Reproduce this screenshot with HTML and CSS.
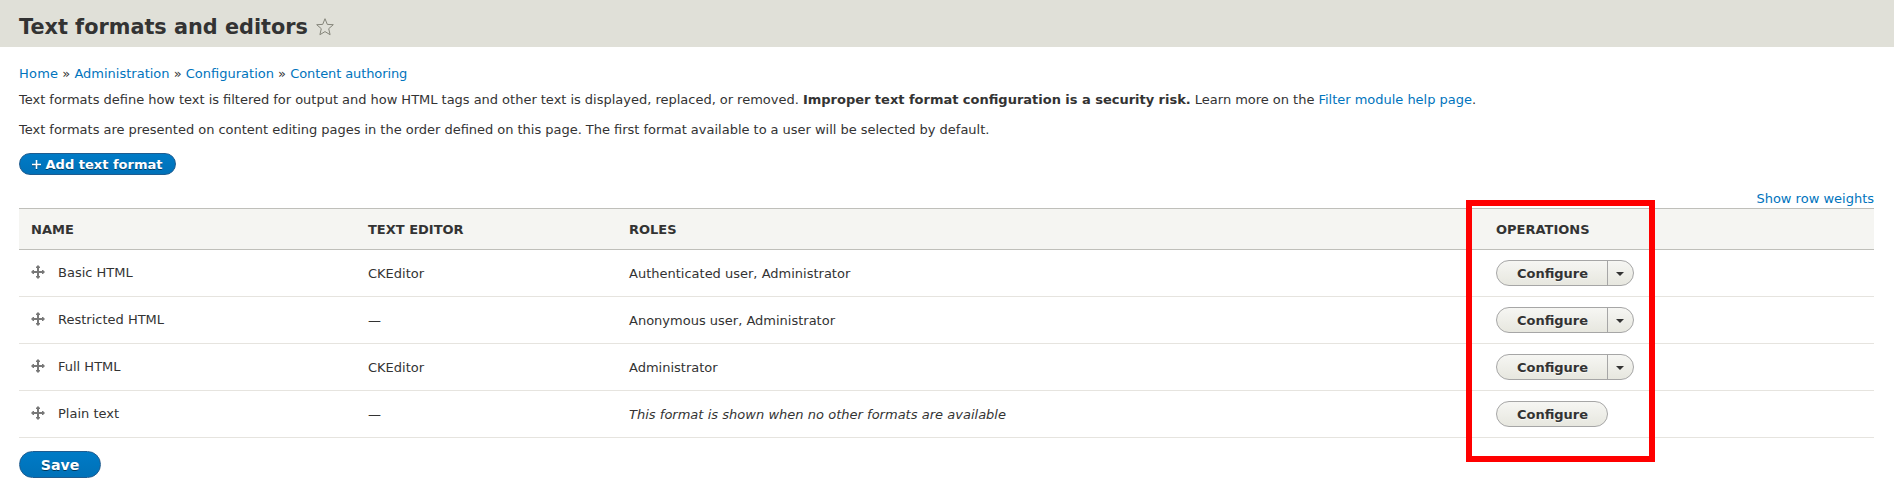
FILE: index.html
```
<!DOCTYPE html>
<html lang="en">
<head>
<meta charset="utf-8">
<title>Text formats and editors</title>
<link rel="stylesheet" href="styles.css">
</head>
<body>
<svg width="0" height="0" class="defs" aria-hidden="true">
  <symbol id="move" viewBox="0 0 14 14"><path fill="#787878" d="M7 0L9 2v1H8v3h3V5h1l2 2-2 2h-1V8H8v3h1v1l-2 2-2-2v-1h1V8H3v1H2L0 7l2-2h1v1h3V3H5V2z"/></symbol>
</svg>
<header class="header">
  <h1 class="title">Text formats and editors</h1>
  <svg class="star" width="20" height="20" viewBox="0 0 20 20"><path d="M10 1.700L12.300 7.400 18.300 7.700 13.700 11.700 15.100 17.700 10 14.600 4.900 17.700 6.300 11.700 1.700 7.700 7.700 7.400Z" fill="none" stroke="#85857a" stroke-width="1"/></svg>
</header>
<main class="content">
  <nav class="breadcrumb"><a class="home">Home</a> » <a>Administration</a> » <a>Configuration</a> » <a class="last">Content authoring</a></nav>
  <p class="help">Text formats define how text is filtered for output and how HTML tags and other text is displayed, replaced, or removed. <strong>Improper text format configuration is a security risk.</strong> Learn more on the <a>Filter module help page</a>.</p>
  <p class="help">Text formats are presented on content editing pages in the order defined on this page. The first format available to a user will be selected by default.</p>
  <a class="button primary add"><svg class="plus" width="9" height="9" viewBox="0 0 9 9"><path d="M4.500 0v9M0 4.500h9" stroke="#fff" stroke-width="1.600"/></svg>Add text format</a>
  <div class="weights"><a>Show row weights</a></div>
  <div class="table-wrap">
    <div class="row head"><div>NAME</div><div>TEXT EDITOR</div><div>ROLES</div><div>OPERATIONS</div></div>
    <div class="row"><div class="name"><svg class="handle"><use href="#move"/></svg>Basic HTML</div><div>CKEditor</div><div>Authenticated user, Administrator</div><div class="ops"><span class="drop"><a class="config">Configure</a><i class="toggle"></i></span></div></div>
    <div class="row"><div class="name"><svg class="handle"><use href="#move"/></svg>Restricted HTML</div><div>—</div><div>Anonymous user, Administrator</div><div class="ops"><span class="drop"><a class="config">Configure</a><i class="toggle"></i></span></div></div>
    <div class="row"><div class="name"><svg class="handle"><use href="#move"/></svg>Full HTML</div><div>CKEditor</div><div>Administrator</div><div class="ops"><span class="drop"><a class="config">Configure</a><i class="toggle"></i></span></div></div>
    <div class="row"><div class="name"><svg class="handle"><use href="#move"/></svg>Plain text</div><div>—</div><div><em>This format is shown when no other formats are available</em></div><div class="ops"><span class="drop"><a class="config">Configure</a></span></div></div>
    <div class="highlight"></div>
  </div>
  <a class="button primary save">Save</a>
</main>
</body>
</html>
```
FILE: styles.css
```
* { box-sizing: border-box; }
body { margin: 0; background: #fff; color: #333; font: 13.008px/20px "DejaVu Sans", sans-serif; }
a { color: #0074bd; text-decoration: none; }
.defs { position: absolute; }
.header { display: flex; align-items: center; height: 47px; padding: 6px 19px 0; background: #e0e0d8; }
.title { margin: 0; font-size: 20.8px; line-height: 28px; }
.star { margin-left: 7px; }
.content { display: flex; flex-direction: column; padding: 17px 20px 0 19px; }
.breadcrumb { height: 20px; margin: 0 0 6px; }
.home { letter-spacing: .2px; }
.last { letter-spacing: -.1px; }
.help { margin: 0 0 10px; height: 20px; word-spacing: -.12px; }
.button { display: flex; align-items: center; justify-content: center; align-self: flex-start; border: 1px solid #1e5c90; border-radius: 20em; background: linear-gradient(#007bc6, #0071b8); color: #fff; font-weight: 700; text-shadow: 0 1px rgba(0, 0, 0, .5); }
.add { width: 157px; height: 22px; margin-top: 3px; padding: 1px 1px 0 0; }
.plus { margin-right: 5px; filter: drop-shadow(0 1px 0 rgba(0, 0, 0, .4)); }
.weights { height: 33px; padding-top: 14px; text-align: right; }
.table-wrap { position: relative; }
.row { display: grid; grid-template-columns: 337px 261px 867px 390px; align-items: center; height: 47px; border-bottom: 1px solid #e6e4df; }
.row > div { padding: 1px 0 0 12px; }
.head { height: 42px; border-top: 1px solid #bfbfba; border-bottom-color: #bfbfba; background: #f5f5f2; font-weight: 700; }
.row > .name { display: flex; align-items: center; padding-top: 0; }
.row > .ops { padding-top: 0; }
.row em { word-spacing: .12px; }
.handle { width: 14px; height: 14px; margin: -2px 13px 0 0; }
.drop { display: inline-flex; height: 26px; vertical-align: top; overflow: hidden; border: 1px solid #a6a6a6; border-radius: 20em; background: linear-gradient(#f6f6f3, #e7e7df); }
.config { width: 110px; padding: 3px 0 0 1px; text-align: center; color: #333; font-weight: 700; text-shadow: 0 1px rgba(255, 255, 255, .6); }
.toggle { display: flex; align-items: center; justify-content: center; width: 26px; border-left: 1px solid #a6a6a6; }
.toggle::before { content: ""; margin: 2px 1px 0 0; border: 4px solid transparent; border-top-color: #333; border-bottom: 0; }
.highlight { position: absolute; left: 1447px; top: -8px; width: 189px; height: 262px; border: 6px solid #f00; }
.save { width: 82px; height: 27px; margin-top: 13px; padding-top: 1px; font-size: 14.1px; }
```
